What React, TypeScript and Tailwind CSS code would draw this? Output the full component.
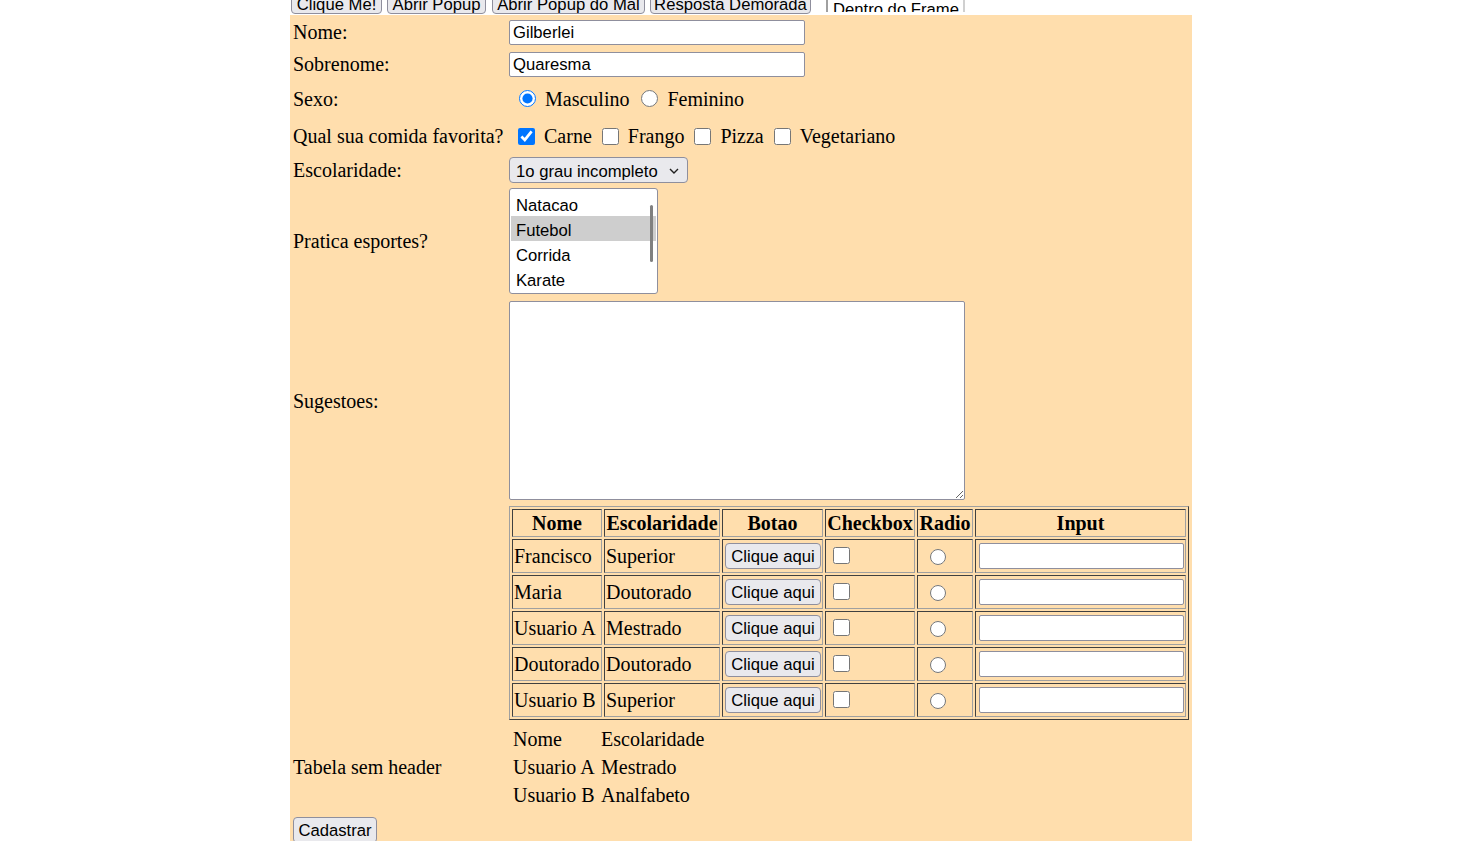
import React from "react";

const sans = "font-['Liberation_Sans',Arial,sans-serif] text-[16.67px]";
const btn = `${sans} h-[26px] pt-[3px] bg-[#e9e9ed] border border-[#8f8f9d] rounded-[4px] text-black leading-none`;
const topBtn = `${sans} h-[26px] pt-[8px] mb-[1px] shrink-0 bg-[#e9e9ed] border border-[#8f8f9d] rounded-[4px] text-black leading-none`;
const field = `${sans} h-[25px] pt-[2px] bg-white border border-[#8f8f9d] rounded-[2px] pl-[3px] outline-none`;
const cellBorder =
  "border border-t-[#404040] border-l-[#404040] border-r-[#a0a0a0] border-b-[#a0a0a0] p-[1px] leading-[23px]";

const rows = [
  ["Francisco", "Superior"],
  ["Maria", "Doutorado"],
  ["Usuario A", "Mestrado"],
  ["Doutorado", "Doutorado"],
  ["Usuario B", "Superior"],
];

function Row({ label, h, children }: { label?: string; h: string; children?: React.ReactNode }) {
  return (
    <div className={`flex items-center ${h}`}>
      <div className="w-[219px] shrink-0 pl-[3px]">{label}</div>
      <div className="flex items-center">{children}</div>
    </div>
  );
}

function Check({ label, checked, first }: { label: string; checked?: boolean; first?: boolean }) {
  return (
    <label className="flex items-center">
      <input
        type="checkbox"
        defaultChecked={checked}
        className={`w-[17px] h-[17px] mr-[9px] ${first ? "ml-[9px]" : "ml-[10px]"}`}
      />
      <span>{label}</span>
    </label>
  );
}

export default function App() {
  return (
    <div className="font-['Liberation_Serif','Times_New_Roman',serif] text-[20px] text-black bg-white min-h-screen">
      <div className="w-[902px] mx-auto">
        {/* top buttons, mostly scrolled out of view */}
        <div className="flex items-end h-[15px] pl-[1px]">
          <button className={`${topBtn} w-[91px]`}>Clique Me!</button>
          <button className={`${topBtn} w-[99px] ml-[5px]`}>Abrir Popup</button>
          <button className={`${topBtn} w-[153px] ml-[6px]`}>Abrir Popup do Mal</button>
          <button className={`${topBtn} w-[161px] ml-[5px]`}>Resposta Demorada</button>
          <div className="ml-[15px] mb-[3px] w-[139px] h-[14px] shrink-0 overflow-hidden border-l-2 border-r-2 border-l-[#a0a0a0] border-r-[#d0d0d0]">
            <div className={`${sans} leading-[19px] pt-[2px] pl-[5px] whitespace-nowrap`}>Dentro do Frame</div>
          </div>
        </div>

        <div className="bg-[#ffdead] pt-[1px] pb-[40px]">
          <Row label="Nome:" h="h-[32px]">
            <input className={`${field} w-[296px]`} defaultValue="Gilberlei" />
          </Row>
          <Row label="Sobrenome:" h="h-[32px]">
            <input className={`${field} w-[296px]`} defaultValue="Quaresma" />
          </Row>
          <Row label="Sexo:" h="h-[37px]">
            <label className="flex items-center">
              <input type="radio" name="sexo" defaultChecked className="w-[17px] h-[17px] ml-[10px] mr-[9px]" />
              <span>Masculino</span>
            </label>
            <label className="flex items-center">
              <input type="radio" name="sexo" className="w-[17px] h-[17px] ml-[12px] mr-[9px]" />
              <span>Feminino</span>
            </label>
          </Row>
          <Row label="Qual sua comida favorita?" h="h-[38px]">
            <Check label="Carne" checked first />
            <Check label="Frango" />
            <Check label="Pizza" />
            <Check label="Vegetariano" />
          </Row>
          <Row label="Escolaridade:" h="h-[30px]">
            <div className={`${sans} h-[26px] w-[179px] pt-[2px] bg-[#e9e9ed] border border-[#8f8f9d] rounded-[4px] flex items-center pl-[6px] justify-between pr-[8px]`}>
              <span>1o grau incompleto</span>
              <svg width="10" height="6" viewBox="0 0 10 6">
                <polyline points="1,1 5,5 9,1" fill="none" stroke="#202020" strokeWidth="1.4" />
              </svg>
            </div>
          </Row>
          <Row label="Pratica esportes?" h="h-[112px]">
            <div className={`${sans} relative w-[149px] h-[106px] bg-white border border-[#8f8f9d] rounded-[3px] pt-[2px] px-[1px] overflow-hidden`}>
              {["Natacao", "Futebol", "Corrida", "Karate"].map((o) => (
                <div
                  key={o}
                  className={`h-[25px] flex items-center pl-[5px] pt-[3px] ${o === "Futebol" ? "bg-[#cecece]" : ""}`}
                >
                  {o}
                </div>
              ))}
              <div className="absolute left-[140px] top-[16px] w-[3px] h-[57px] rounded-full bg-[#808080]" />
            </div>
          </Row>
          <Row label="Sugestoes:" h="h-[207px]">
            <textarea className="w-[456px] h-[199px] bg-white border border-[#8f8f9d] rounded-[2px] resize outline-none" />
          </Row>
          <Row h="h-[217px]">
            <table className="border-separate border-spacing-[2px] border border-t-[#a0a0a0] border-l-[#a0a0a0] border-r-[#404040] border-b-[#404040]">
              <thead>
                <tr>
                  <th className={`${cellBorder} h-[28px] pt-[2px] w-[90px]`}>Nome</th>
                  <th className={`${cellBorder} h-[28px] pt-[2px] w-[116px]`}>Escolaridade</th>
                  <th className={`${cellBorder} h-[28px] pt-[2px] w-[101px]`}>Botao</th>
                  <th className={`${cellBorder} h-[28px] pt-[2px] w-[90px]`}>Checkbox</th>
                  <th className={`${cellBorder} h-[28px] pt-[2px] w-[56px]`}>Radio</th>
                  <th className={`${cellBorder} h-[28px] pt-[2px] w-[211px]`}>Input</th>
                </tr>
              </thead>
              <tbody>
                {rows.map(([nome, esc], i) => (
                  <tr key={i}>
                    <td className={`${cellBorder} h-[34px] pt-[3px] whitespace-nowrap`}>{nome}</td>
                    <td className={`${cellBorder} h-[34px] pt-[3px] whitespace-nowrap`}>{esc}</td>
                    <td className={`${cellBorder} h-[34px]`}>
                      <button className={`${btn} w-[96px] ml-[1px] block`}>Clique aqui</button>
                    </td>
                    <td className={`${cellBorder} h-[34px]`}>
                      <input type="checkbox" className="w-[17px] h-[17px] ml-[6px] block -mt-[1px]" />
                    </td>
                    <td className={`${cellBorder} h-[34px]`}>
                      <input type="radio" name={`r${i}`} className="w-[16px] h-[16px] ml-[11px] block mt-[2px]" />
                    </td>
                    <td className={`${cellBorder} h-[34px]`}>
                      <input className={`${field} h-[26px] w-[205px] ml-[2px] block`} />
                    </td>
                  </tr>
                ))}
              </tbody>
            </table>
          </Row>
          <Row label="Tabela sem header" h="h-[92px]">
            <div className="grid grid-cols-[88px_auto] auto-rows-[28px] items-center pl-[4px]">
              <span>Nome</span>
              <span>Escolaridade</span>
              <span>Usuario A</span>
              <span>Mestrado</span>
              <span>Usuario B</span>
              <span>Analfabeto</span>
            </div>
          </Row>
          <div className="flex pt-[4px] pl-[3px]">
            <button className={`${btn} w-[84px] bg-[#d0d0d7]`}>Cadastrar</button>
          </div>
        </div>
      </div>
    </div>
  );
}
